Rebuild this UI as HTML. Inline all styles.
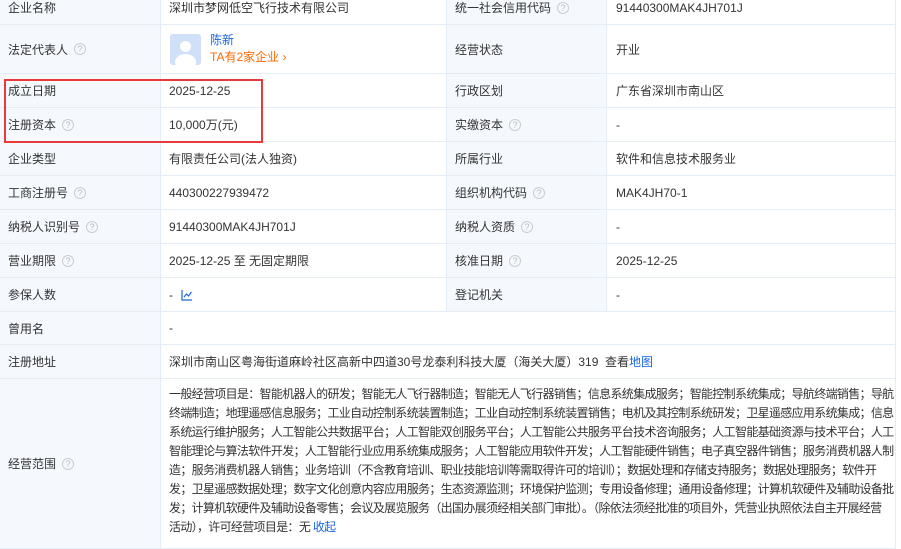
<!DOCTYPE html>
<html><head><meta charset="utf-8"><style>
*{margin:0;padding:0;box-sizing:border-box}
body{width:901px;height:537px;overflow:hidden;background:#fff;font-family:"Liberation Sans","Noto Sans CJK SC",sans-serif;font-size:12px;color:#333;position:relative}
.row{position:absolute;left:0;width:896px;border-bottom:1px solid #e4ecf5;display:flex}
.row>div{border-right:1px solid #e4ecf5;display:flex;align-items:center;padding-left:8px;white-space:nowrap}
.l{background:#f5f8fd;width:161px;flex-shrink:0}
.v{width:286px;flex-shrink:0}
.l2{background:#f5f8fd;width:160px;flex-shrink:0}
.v2{flex:1;padding-left:9px!important}
.q{display:inline-block;width:12px;height:12px;border:1px solid #ccc;border-radius:50%;color:#bbb;font-size:9px;line-height:10px;text-align:center;margin-left:6px}
.red{position:absolute;left:4px;top:79px;width:259px;height:64px;border:2px solid #e8393b}
a{color:#1a66e0;text-decoration:none}
</style></head><body>
<div class="row" style="top:-9px;height:34px"><div class="l">企业名称</div><div class="v">深圳市梦网低空飞行技术有限公司</div><div class="l2">统一社会信用代码<span class="q">?</span></div><div class="v2">91440300MAK4JH701J</div></div>
<div class="row" style="top:25px;height:49px"><div class="l">法定代表人<span class="q">?</span></div><div class="v" style="padding-left:9px">
<div style="width:31px;height:31px;background:#cfe0f8;border-radius:3px;position:relative;overflow:hidden"><div style="position:absolute;left:10px;top:7px;width:11px;height:11px;border-radius:50%;background:#fff"></div><div style="position:absolute;left:5px;top:20px;width:21px;height:16px;border-radius:50%;background:#fff"></div></div>
<div style="margin-left:9px;line-height:17px"><div style="color:#1a66e0">陈新</div><div style="color:#f60">TA有2家企业 ›</div></div></div><div class="l2">经营状态</div><div class="v2">开业</div></div>
<div class="row" style="top:74px;height:34px"><div class="l">成立日期</div><div class="v">2025-12-25</div><div class="l2">行政区划</div><div class="v2">广东省深圳市南山区</div></div>
<div class="row" style="top:108px;height:34px"><div class="l">注册资本<span class="q">?</span></div><div class="v">10,000万(元)</div><div class="l2">实缴资本<span class="q">?</span></div><div class="v2">-</div></div>
<div class="row" style="top:142px;height:34px"><div class="l">企业类型</div><div class="v">有限责任公司(法人独资)</div><div class="l2">所属行业</div><div class="v2">软件和信息技术服务业</div></div>
<div class="row" style="top:176px;height:34px"><div class="l">工商注册号<span class="q">?</span></div><div class="v">440300227939472</div><div class="l2">组织机构代码<span class="q">?</span></div><div class="v2">MAK4JH70-1</div></div>
<div class="row" style="top:210px;height:34px"><div class="l">纳税人识别号<span class="q">?</span></div><div class="v">91440300MAK4JH701J</div><div class="l2">纳税人资质<span class="q">?</span></div><div class="v2">-</div></div>
<div class="row" style="top:244px;height:34px"><div class="l">营业期限<span class="q">?</span></div><div class="v">2025-12-25 至 无固定期限</div><div class="l2">核准日期<span class="q">?</span></div><div class="v2">2025-12-25</div></div>
<div class="row" style="top:278px;height:34px"><div class="l">参保人数</div><div class="v">- <svg width="12" height="12" style="margin-left:8px" viewBox="0 0 12 12"><path d="M1 1V11H11M3 8L5.5 5L7.5 7L10.5 3" fill="none" stroke="#1a66e0" stroke-width="1.2"/></svg></div><div class="l2">登记机关</div><div class="v2">-</div></div>
<div class="row" style="top:312px;height:33px"><div class="l">曾用名</div><div style="flex:1">-</div></div>
<div class="row" style="top:345px;height:34px"><div class="l">注册地址</div><div style="flex:1">深圳市南山区粤海街道麻岭社区高新中四道30号龙泰利科技大厦（海关大厦）319 &nbsp;查看<a>地图</a></div></div>
<div class="row" style="top:379px;height:170px"><div class="l">经营范围<span class="q">?</span></div><div style="flex:1;white-space:nowrap;line-height:19px;padding-top:6px;display:block;letter-spacing:-0.68px;overflow:hidden">一般经营项目是：智能机器人的研发；智能无人飞行器制造；智能无人飞行器销售；信息系统集成服务；智能控制系统集成；导航终端销售；导航<br>终端制造；地理遥感信息服务；工业自动控制系统装置制造；工业自动控制系统装置销售；电机及其控制系统研发；卫星遥感应用系统集成；信息<br>系统运行维护服务；人工智能公共数据平台；人工智能双创服务平台；人工智能公共服务平台技术咨询服务；人工智能基础资源与技术平台；人工<br>智能理论与算法软件开发；人工智能行业应用系统集成服务；人工智能应用软件开发；人工智能硬件销售；电子真空器件销售；服务消费机器人制<br>造；服务消费机器人销售；业务培训（不含教育培训、职业技能培训等需取得许可的培训）；数据处理和存储支持服务；数据处理服务；软件开<br>发；卫星遥感数据处理；数字文化创意内容应用服务；生态资源监测；环境保护监测；专用设备修理；通用设备修理；计算机软硬件及辅助设备批<br>发；计算机软硬件及辅助设备零售；会议及展览服务（出国办展须经相关部门审批）。（除依法须经批准的项目外，凭营业执照依法自主开展经营<br>活动），许可经营项目是：无 <a>收起</a></div></div>
<div class="red"></div>
</body></html>
